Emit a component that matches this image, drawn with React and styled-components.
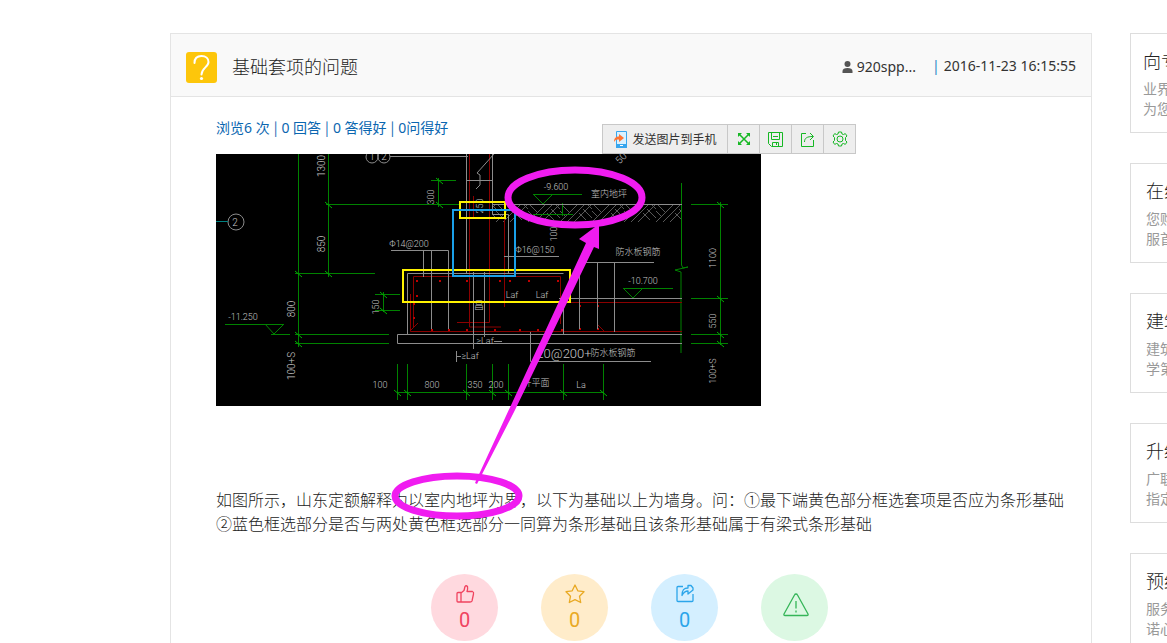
import React from "react";
import styled, { createGlobalStyle } from "styled-components";

const stats = ["浏览6 次", "0 回答", "0 答得好", "0问得好"];

const sideCards = [
  { title: "向专", lines: ["业界", "为您"], inset: 12 },
  { title: "在线", lines: ["您购", "服首"], inset: 15 },
  { title: "建筑", lines: ["建筑", "学第"], inset: 15 },
  { title: "升级", lines: ["广联", "指定"], inset: 15 },
  { title: "预约", lines: ["服务", "诺心"], inset: 15 },
];

// [x, y, text, font size, rotation]
const labels = [
  [105, 12, "1300", 10, -90],
  [105, 90, "850", 10, -90],
  [75, 155, "800", 10, -90],
  [75, 212, "100+S", 10, -90],
  [160, 153, "150", 9, -90],
  [215, 43, "300", 9, -90],
  [264, 52, "250", 9, -90],
  [338, 80, "100", 9, -90],
  [497, 104, "1100", 9, -90],
  [497, 167, "550", 9, -90],
  [497, 217, "100+S", 9, -90],
  [405, 4, "50", 10, -45],
  [19, 68, "2", 10, 0],
  [156, 2, "1", 10, 0],
  [168, 2, "2", 10, 0],
  [27, 163, "-11.250", 9, 0],
  [164, 231, "100", 9, 0],
  [216, 231, "800", 9, 0],
  [259, 231, "350", 9, 0],
  [280, 231, "200", 9, 0],
  [365, 231, "La", 9, 0],
  [193, 90, "Φ14@200", 9, 0],
  [319, 96, "Φ16@150", 9, 0],
  [340, 33, "-9.600", 9, 0],
  [427, 127, "-10.700", 9, 0],
  [296, 141, "Laf", 9, 0],
  [326, 141, "Laf", 9, 0],
  [269, 187, "≥Laf", 9, 0],
  [254, 202, "≥Laf", 9, 0],
  [263, 151, "昌", 10, 0],
  [393, 40, "室内地坪", 9, 0],
  [422, 98, "防水板钢筋", 9, 0],
  [320, 229, "升平面", 9, 0],
  [348, 199, "20@200+", 13, 0],
  [397, 199, "防水板钢筋", 9, 0],
];

const ticks = [
  [82, 119], [112, 50], [112, 119], [82, 180], [82, 189], [167, 140], [167, 156],
  [223, 26], [223, 50], [504, 50], [504, 144], [504, 180], [504, 189],
  [181, 238], [191, 238], [250, 238], [276, 238], [292, 238], [347, 238], [387, 238],
];

const dots = [
  [200, 126], [223, 126], [250, 126], [283, 126], [293, 126], [312, 126], [341, 126],
  [200, 141], [197, 149], [197, 163], [215, 175], [232, 175], [250, 175], [278, 175],
  [303, 175], [321, 175], [335, 175], [345, 175], [363, 151], [363, 174], [381, 151], [381, 174],
];

const Drawing = () => (
  <StyledDrawing viewBox="0 0 545 252" role="img" aria-label="基础剖面图">
    <defs>
      <pattern id="hatch" width="32" height="18" x="280" y="51" patternUnits="userSpaceOnUse">
        <path
          d="M0 17L17 0M6 18L24 0M13 18L31 0M19 8L26 15M23 4L32 13M28 0L32 4M2 0L10 8M0 6L5 11"
          fill="none"
          stroke="#585858"
        />
      </pattern>
    </defs>
    <rect width="545" height="252" fill="#000" />
    <rect x="276" y="51" width="190" height="17" fill="url(#hatch)" />

    <g fill="none" stroke="#008200">
      <path d="M82.5 0V193M112.5 0V123M110 50.5H244M79 119.5H159M79 180.5H173M79 189.5H173" />
      <path d="M9 170.5H68M49 170L58 180L68 170M55 180.5H74" />
      <path d="M159 140.5H184M159 156.5H184M167.5 138V158M222.5 24V53M215 26.5H240" />
      <path d="M317 40.5H366M317 40L327 50L337 40M346.5 49V62M317 60.5H357" />
      <path d="M407 134.5H457M407 134L417 144L427 134" />
      <path d="M465.5 29V111L467 114L472 113L459 116L465 118V199" />
      <path d="M504.5 48V191M475 50.5H512M475 144.5H512M475 180.5H512M475 189.5H512" />
      <path d="M181 238.5H388M181.5 210V246M191.5 210V246M250.5 210V246M276.5 210V246M292.5 210V246M347.5 210V246M387.5 210V246" />
    </g>
    <g stroke="#00b000">
      {ticks.map(([x, y]) => (
        <path key={`${x}-${y}`} d={`M${x - 3} ${y - 2}L${x + 4} ${y + 4}`} />
      ))}
    </g>

    <g fill="none" stroke="#8b0000">
      <path d="M253.5 0V173H285M273.5 0V168.5H241M288.5 60V153M257.5 42V64" />
      <path d="M197.5 173V122.5H344.5V170M194.5 140V177.5H466M347 148.5H466M194 177L202 169M381 170L388 177" />
    </g>
    <g fill="#c00000">
      {dots.map(([x, y]) => (
        <rect key={`${x}-${y}`} x={x} y={y} width="2" height="2" />
      ))}
    </g>

    <g fill="none" stroke="#8c8c8c">
      <circle cx="20" cy="68" r="8" />
      <circle cx="156" cy="3" r="6" />
      <circle cx="168" cy="3" r="6" />
      <path d="M174 2.5H252M250.5 0V119M276.5 0V60.5H292.5V119M250 26.5H276M278 0L261 19L264 21V31L260 35" />
      <path d="M191.5 180V119.5H347.5M347.5 150V180" />
      <path d="M276 50.5H466M343 144.5H466M466 180.5H181.5V189.5H466" />
      <path d="M175 96.5H232.5V175M207.5 97V123M215.5 97V175M257.5 118V195M268.5 118V183" />
      <path d="M363.5 112V175M381.5 108V175M398.5 108V178M370 108.5H438M288 102.5H343M314.5 178V207.5H435" />
      <path d="M278 187.5H286M240.5 197V208M240 202.5H245" />
    </g>
    <path d="M0 67.5H12" stroke="#008080" />

    {labels.map(([x, y, text, size, turn]) => (
      <DrawingLabel key={`${x}-${y}`} $size={size} transform={`translate(${x} ${y}) rotate(${turn})`}>
        {text}
      </DrawingLabel>
    ))}

    <g fill="none" strokeWidth="2">
      <rect x="244" y="48" width="45" height="16" stroke="#fff200" />
      <rect x="187" y="116" width="167" height="32" stroke="#fff200" />
      <rect x="237" y="56" width="62" height="66" stroke="#1aa0e8" />
    </g>
  </StyledDrawing>
);

const App = () => {
  return (
    <>
      <GlobalStyle />
      <Page>
        <Question>
          <Header>
            <svg width="31" height="31" viewBox="0 0 31 31" fill="none" aria-hidden="true">
              <rect width="31" height="31" rx="3" fill="#fdc60b" />
              <path
                d="M8.5 11C8.5 6 11.5 4 15.500 4C20 4 22.500 6.800 22.500 10C22.500 15 15.500 16 15.500 22.500"
                stroke="#fff"
                strokeWidth="2"
                strokeLinecap="round"
              />
              <circle cx="15.500" cy="26.500" r="1.600" fill="#fff" />
            </svg>
            <Title>基础套项的问题</Title>
            <Author>
              <svg width="11" height="12" viewBox="0 0 11 12" fill="#555" aria-hidden="true">
                <circle cx="5.500" cy="3" r="3" />
                <path d="M0.500 12V10C0.500 8 2.500 7 5.500 7S10.500 8 10.500 10V12Z" />
              </svg>
              920spp...
            </Author>
            <Posted>
              <span>|</span>
              <time>2016-11-23 16:15:55</time>
            </Posted>
          </Header>

          <Content>
            <TopRow>
              <Stats>
                {stats.map((stat, i) => (
                  <React.Fragment key={stat}>
                    {i > 0 && <Divider>|</Divider>}
                    {stat}
                  </React.Fragment>
                ))}
              </Stats>
              <Toolbar>
                <ToolButton $wide>
                  <svg width="14" height="17" viewBox="0 0 14 17" fill="none" aria-hidden="true">
                    <path d="M3.500 0.500H13.500V16.500H3.500Z" fill="#d9f1ff" stroke="#37a6ee" />
                    <path d="M3 13H14V17H3Z" fill="#37a6ee" />
                    <path d="M7 14.500H10" stroke="#fff" />
                    <path d="M1 11C1 7 3 5.500 6 5.500V3L11 7L6 11V8.500C4 8.500 2.500 8.500 1 11Z" fill="#ff7433" />
                  </svg>
                  发送图片到手机
                </ToolButton>
                <ToolButton aria-label="全屏">
                  <svg width="14" height="14" viewBox="0 0 14 14" fill="#16b824" stroke="#16b824" aria-hidden="true">
                    <path d="M2 2L12 12M12 2L2 12" strokeWidth="1.500" />
                    <path d="M1 1H5L1 5ZM13 1V5L9 1ZM1 13V9L5 13ZM13 13H9L13 9Z" stroke="none" />
                  </svg>
                </ToolButton>
                <ToolButton aria-label="保存">
                  <svg width="15" height="15" viewBox="0 0 15 15" fill="none" stroke="#16b824" aria-hidden="true">
                    <path d="M0.500 0.500H14.500V14.500H3.500L0.500 11.500ZM3.500 0.500V7.500H11.500V0.500M4.500 14V10.500H10.500V14M8.500 10.500V13M5 4.500H10" />
                  </svg>
                </ToolButton>
                <ToolButton aria-label="分享">
                  <svg width="15" height="15" viewBox="0 0 15 15" fill="none" stroke="#16b824" aria-hidden="true">
                    <path d="M6 1.500H1.500V14.500H13.500V8M4.500 10C4.500 6 7 4.500 13 4.500M10 1L13.500 4.500L10 8" />
                  </svg>
                </ToolButton>
                <ToolButton aria-label="设置">
                  <svg width="16" height="16" viewBox="0 0 16 16" fill="none" stroke="#16b824" aria-hidden="true">
                    <path
                      d="M6.500 1H9.500L10 3L11.500 3.500L13.300 2.600L15 5L13.500 6.500V9.500L15 11L13.300 13.400L11.500 12.500L10 13L9.500 15H6.500L6 13L4.500 12.500L2.700 13.400L1 11L2.500 9.500V6.500L1 5L2.700 2.600L4.500 3.500L6 3Z"
                      strokeLinejoin="round"
                    />
                    <circle cx="8" cy="8" r="3" />
                  </svg>
                </ToolButton>
              </Toolbar>
            </TopRow>

            <Drawing />

            <Body>
              如图所示，山东定额解释为以室内地坪为界，以下为基础以上为墙身。问：①最下端黄色部分框选套项是否应为条形基础
              <br />
              ②蓝色框选部分是否与两处黄色框选部分一同算为条形基础且该条形基础属于有梁式条形基础
            </Body>

            <Actions>
              <ActionButton $bg="#ffd9df" $color="#f0435f" aria-label="点赞 0">
                <svg width="20" height="20" viewBox="0 0 20 20" aria-hidden="true">
                  <path d="M6 8.500H3Q2 8.500 2 9.500V17Q2 18 3 18H6ZM6 9L9 6.500L10 2.500Q11 1 12.500 2.500Q13 5 12 7.500H17.500Q19 8 18.500 10L17 17Q16.500 18 15 18H6" />
                </svg>
                0
              </ActionButton>
              <ActionButton $bg="#ffecca" $color="#e9a923" aria-label="收藏 0">
                <svg width="20" height="20" viewBox="0 0 20 20" aria-hidden="true">
                  <path d="M10 1L12.800 6.800L19 7.700L14.500 12.200L15.700 18.500L10 15.700L4.300 18.500L5.500 12.200L1 7.700L7.200 6.800Z" />
                </svg>
                0
              </ActionButton>
              <ActionButton $bg="#d4efff" $color="#2ba5ea" aria-label="分享 0">
                <svg width="20" height="20" viewBox="0 0 20 20" aria-hidden="true">
                  <path d="M8 2.500H3Q2 2.500 2 3.500V16.500Q2 17.500 3 17.500H17Q18 17.500 18 16.500V10M7 11.500C7 6 9 4 13 4V1.500H16L18 4V6L13 10V7C10 7 8.500 8.500 7 11.500Z" />
                </svg>
                0
              </ActionButton>
              <ActionButton $bg="#dcf8e3" $color="#35b558" aria-label="举报">
                <svg width="28" height="32" viewBox="-1 0 28 32" aria-hidden="true">
                  <path d="M14 2Q15 2 15.500 3L26 22Q26.500 23.500 25 23.500H3Q1.500 23.500 2 22L12.500 3Q13 2 14 2ZM14 9V16.500M14 18.500V20.500" />
                </svg>
              </ActionButton>
            </Actions>

            <Marks width="300" height="380" viewBox="380 150 300 380" aria-hidden="true">
              <g fill="none" stroke="#f01cf0" strokeWidth="7">
                <ellipse cx="575" cy="197.500" rx="67" ry="27.500" />
                <ellipse cx="457" cy="496" rx="62" ry="20" />
              </g>
              <path d="M475 483L586 243L579 239L599 224V249L594 247L514 412L477 484Z" fill="#f01cf0" />
            </Marks>
          </Content>
        </Question>

        <Sidebar>
          {sideCards.map(({ title, lines, inset }) => (
            <SideCard key={title} $inset={inset}>
              <h2>{title}</h2>
              <p>
                {lines[0]}
                <br />
                {lines[1]}
              </p>
            </SideCard>
          ))}
        </Sidebar>
      </Page>
    </>
  );
};

const GlobalStyle = createGlobalStyle`
  body {
    margin: 0;
    background: #fff;
    color: #333;
    font-family: "Noto Sans", "Noto Sans CJK SC", sans-serif;
    font-size: 14px;
    overflow: hidden;
  }

  * {
    box-sizing: border-box;
  }

  button {
    font: inherit;
    cursor: pointer;
  }

  svg {
    flex-shrink: 0;
  }
`;

const Page = styled.div`
  display: grid;
  grid-template-columns: minmax(0, 1fr) 37px;
  column-gap: 38px;
  padding: 33px 0 0 170px;
`;

const Question = styled.article`
  border: 1px solid #e4e4e4;
`;

const Header = styled.header`
  display: flex;
  align-items: center;
  height: 63px;
  padding: 4px 15px 0;
  background: #f9f9f9;
  border-bottom: 1px solid #e4e4e4;
  line-height: 20px;
`;

const Title = styled.h1`
  flex: 1;
  margin: 0 0 0 15px;
  color: #222;
  font-size: 18px;
  font-weight: 300;
  line-height: 24px;
`;

const Author = styled.div`
  display: flex;
  align-items: center;
  gap: 4px;
  margin-right: 16px;
`;

const Posted = styled.div`
  display: flex;
  gap: 4px;
  padding-bottom: 2px;

  span {
    color: #2a83c4;
  }
`;

const Content = styled.div`
  position: relative;
  padding: 27px 24px 16px 45px;
`;

const TopRow = styled.div`
  display: flex;
`;

const Stats = styled.div`
  flex: 0 0 386px;
  color: #0a66b0;
  line-height: 6px;
`;

const Divider = styled.span`
  padding: 0 4px;
  font-family: "Noto Sans CJK SC", sans-serif;
`;

const Toolbar = styled.div`
  display: flex;
  height: 30px;
  border: 1px solid #c8c8c8;
`;

const ToolButton = styled.button`
  display: flex;
  align-items: center;
  justify-content: center;
  gap: 5px;
  width: ${({ $wide }) => ($wide ? "124px" : "32px")};
  padding: 0;
  border: 0;
  background: #eee;
  color: #333;
  font-size: 12px;

  & + & {
    border-left: 1px solid #c8c8c8;
  }
`;

const StyledDrawing = styled.svg`
  display: block;
  width: 545px;
  max-width: 100%;
`;

const DrawingLabel = styled.text`
  fill: #c4c4c4;
  font-family: "Liberation Sans Narrow", Roboto, "Noto Sans CJK SC", sans-serif;
  font-size: ${({ $size }) => $size}px;
  font-weight: 300;
  text-anchor: middle;
  dominant-baseline: central;
`;

const Body = styled.p`
  margin: 81px 0 39px;
  color: #222;
  font-family: "Noto Sans CJK SC", sans-serif;
  font-size: 16px;
  font-weight: 300;
  line-height: 24px;
`;

const Actions = styled.div`
  display: flex;
  justify-content: center;
  gap: 43px;
  padding-right: 24px;
`;

const ActionButton = styled.button`
  display: flex;
  flex-direction: column;
  align-items: center;
  justify-content: center;
  gap: 4px;
  width: 67px;
  height: 67px;
  padding: 0;
  border: 0;
  border-radius: 50%;
  background: ${({ $bg }) => $bg};
  color: ${({ $color }) => $color};
  font-family: Roboto, sans-serif;
  font-size: 20px;
  line-height: 24px;

  svg {
    fill: none;
    stroke: currentColor;
    stroke-width: 1.3;
    stroke-linejoin: round;
  }
`;

/* annotation drawn over the picture and the text */
const Marks = styled.svg`
  position: absolute;
  top: 53px;
  left: 209px;
  pointer-events: none;
`;

const Sidebar = styled.aside`
  display: flex;
  flex-direction: column;
  gap: 30px;
  overflow: hidden;
`;

const SideCard = styled.section`
  width: 240px;
  height: 100px;
  padding: 15px 0 0 ${({ $inset }) => $inset}px;
  border: 1px solid #ddd;

  h2 {
    margin: 0 0 6px;
    color: #222;
    font-size: 18px;
    font-weight: 300;
    line-height: 24px;
  }

  p {
    margin: 0;
    color: #999;
    line-height: 20px;
  }
`;

export default App;
